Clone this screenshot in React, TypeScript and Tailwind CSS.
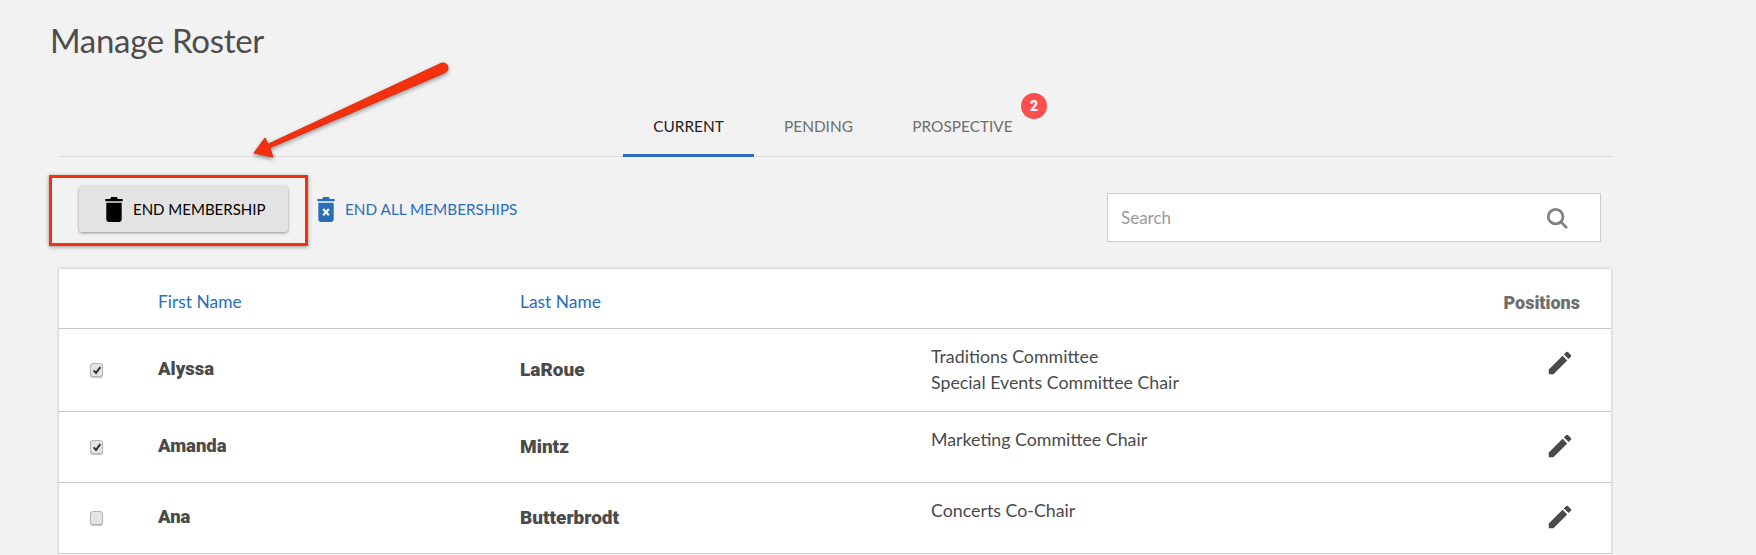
import { MdEdit } from 'react-icons/md'

const rows = [
  { first: 'Alyssa', last: 'LaRoue', positions: ['Traditions Committee', 'Special Events Committee Chair'], checked: true, h: 'min-h-[83px]' },
  { first: 'Amanda', last: 'Mintz', positions: ['Marketing Committee Chair'], checked: true, h: 'min-h-[71px]' },
  { first: 'Ana', last: 'Butterbrodt', positions: ['Concerts Co-Chair'], checked: false, h: 'min-h-[71px]' },
]

function TrashIcon({ className }: { className: string }) {
  return (
    <svg viewBox="0 0 18 26" className={className} fill="currentColor">
      <path d="M6 0h6l1 2h5v2.500H0V2h5z" />
      <path d="M1 6h16v17.500a2.500 2.500 0 0 1-2.500 2.500h-11A2.500 2.500 0 0 1 1 23.500z" />
    </svg>
  )
}

function TrashXIcon({ className }: { className: string }) {
  return (
    <svg viewBox="0 0 18 26" className={className}>
      <path fill="currentColor" d="M6 0h6l1 2h5v2.500H0V2h5z" />
      <path fill="currentColor" d="M1 6h16v17.500a2.500 2.500 0 0 1-2.500 2.500h-11A2.500 2.500 0 0 1 1 23.500z" />
      <path d="M6 12.500l6 6.500M12 12.500l-6 6.500" stroke="#f2f2f2" strokeWidth="2.400" />
    </svg>
  )
}

function Checkbox({ checked }: { checked: boolean }) {
  return (
    <div className="w-[13px] h-[14px] rounded-[3px] border border-[#b5b5b5] bg-[#e4e4e4] shadow-[0_1px_1px_rgba(0,0,0,0.25)] flex items-center justify-center">
      {checked && (
        <svg viewBox="0 0 12 12" className="w-[10px] h-[10px]">
          <path d="M2 6.500l2.800 3L10 2.500" fill="none" stroke="#333" strokeWidth="2.400" />
        </svg>
      )}
    </div>
  )
}

export default function App() {
  return (
    <div className="relative h-[555px] overflow-hidden bg-[#f2f2f2] font-['Lato','Open_Sans',sans-serif] text-[#4a4a4a]">
      <h1 className="pl-[50px] pt-[20px] text-[33px] leading-[40px] text-[#4d4d4d] tracking-[-0.3px]">Manage Roster</h1>

      {/* Tabs */}
      <div className="mt-[36px] ml-[58px] w-[1555px] h-[61px] border-b border-[#dedede] flex pl-[565px] text-[15.4px]">
        <div className="w-[131px] h-[61px] border-b-[3px] border-[#2a6ebb] text-center text-[#222] leading-[60px]">CURRENT</div>
        <div className="ml-[30px] w-[67px] text-center text-[#6e6e6e] leading-[60px]">PENDING</div>
        <div className="ml-[61px] w-[101px] text-center text-[#6e6e6e] leading-[60px] relative whitespace-nowrap">
          PROSPECTIVE
          <span className="absolute left-[109px] top-[-3px] w-[26px] h-[26px] rounded-full bg-[#fb4f4f] text-white text-[14px] leading-[26px] font-['Roboto',sans-serif] font-black">2</span>
        </div>
      </div>

      {/* Actions */}
      <div className="flex ml-[79px] mr-[155px] mt-[29px] h-[83px] items-start text-[15.3px]">
        <button className="w-[209px] h-[46px] rounded-[3px] bg-[#e3e3e3] shadow-[0_1px_3px_rgba(0,0,0,0.4)] flex items-center pl-[26px] gap-[10px] text-[15px] text-black whitespace-nowrap">
          <TrashIcon className="w-[18px] h-[25px] text-black" />
          END MEMBERSHIP
        </button>
        <div className="ml-[29px] h-[46px] flex items-center gap-[10px] text-[#2a6ebb] whitespace-nowrap">
          <TrashXIcon className="w-[18px] h-[25px]" />
          END ALL MEMBERSHIPS
        </div>
        <div className="ml-auto mt-[7px] w-[494px] h-[49px] border border-[#cccccc] bg-white flex items-center justify-between pl-[13px] pr-[32px] text-[17px] text-[#999]">
          Search
          <svg viewBox="0 0 24 24" className="w-[22px] h-[22px]" fill="none" stroke="#808080" strokeWidth="3">
            <circle cx="10.500" cy="10.500" r="8" />
            <path d="M16.500 16.500L22 22" strokeLinecap="round" />
          </svg>
        </div>
      </div>

      {/* Table */}
      <div className="ml-[59px] w-[1552px] bg-white shadow-[0_0_3px_rgba(0,0,0,0.25)] text-[17.8px]">
        <div className="h-[60px] pt-[8px] border-b border-[#c8c8c8] grid grid-cols-[99px_362px_411px_1fr] items-center">
          <div />
          <div className="text-[#2a6ebb] text-[17.4px]">First Name</div>
          <div className="text-[#2a6ebb] text-[17.4px]">Last Name</div>
          <div className="text-right pr-[31px] font-['Roboto',sans-serif] font-black text-[18px] text-[#6e6e6e]">Positions</div>
        </div>
        {rows.map((r) => (
          <div key={r.first} className={`${r.h} border-b border-[#c8c8c8] grid grid-cols-[99px_362px_411px_1fr]`}>
            <div className="flex items-center justify-center pr-[24px]"><Checkbox checked={r.checked} /></div>
            <div className="self-center font-['Roboto',sans-serif] font-black text-[18.5px]">{r.first}</div>
            <div className="self-center font-['Roboto',sans-serif] font-black text-[19px]">{r.last}</div>
            <div className="flex justify-between pt-[14px] pr-[38px] leading-[26px]">
              <div>
                {r.positions.map((p) => <div key={p}>{p}</div>)}
              </div>
              <MdEdit className="w-[30px] h-[30px] mt-[5px] mr-[-2px] text-[#4a4a4a]" />
            </div>
          </div>
        ))}
        <div className="h-10" />
      </div>

      {/* Annotation */}
      <div className="absolute left-[49px] top-[175px] w-[259px] h-[71px] border-[3px] border-[#f5300d] shadow-[0_1px_4px_rgba(0,0,0,0.4)]" />
      <svg className="absolute left-[240px] top-[50px] w-[220px] h-[120px] drop-shadow-[0_2px_2px_rgba(0,0,0,0.4)]" viewBox="0 0 220 120">
        <path
          d="M14 103L25 88L28 94.200L201 13.400A5 5 0 0 1 205 22.600L29.800 97.800L33 107Z"
          fill="#f5300d"
          stroke="#d92a0a"
          strokeWidth="1"
          strokeLinejoin="round"
        />
      </svg>
    </div>
  )
}
